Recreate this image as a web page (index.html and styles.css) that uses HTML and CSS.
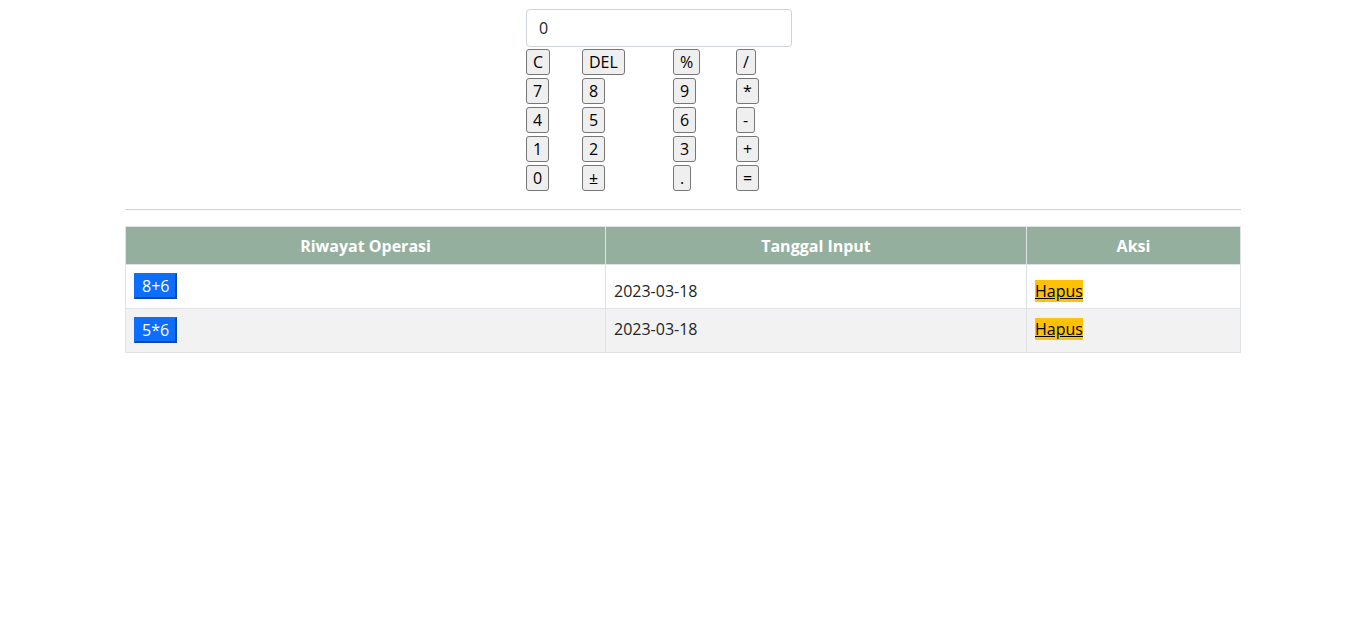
FILE: index.html
```html
<!DOCTYPE html>
<html lang="id">
<head>
<meta charset="utf-8">
<title>Kalkulator</title>
<link rel="stylesheet" href="styles.css">
</head>
<body>
<div class="container">
  <div class="calc">
    <input class="display" type="text" value="0" readonly>
    <div class="keys">
      <button class="key">C</button><button class="key">DEL</button><button class="key">%</button><button class="key">/</button>
      <button class="key">7</button><button class="key">8</button><button class="key">9</button><button class="key">*</button>
      <button class="key">4</button><button class="key">5</button><button class="key">6</button><button class="key">-</button>
      <button class="key">1</button><button class="key">2</button><button class="key">3</button><button class="key">+</button>
      <button class="key">0</button><button class="key">±</button><button class="key">.</button><button class="key">=</button>
    </div>
  </div>
  <hr class="divider">
  <table class="history">
    <thead>
      <tr>
        <th class="col-op">Riwayat Operasi</th>
        <th class="col-date">Tanggal Input</th>
        <th class="col-act">Aksi</th>
      </tr>
    </thead>
    <tbody>
      <tr class="row-first">
        <td class="op-cell"><button class="op">8+6</button></td>
        <td class="shift">2023-03-18</td>
        <td class="shift"><a class="del" href="#">Hapus</a></td>
      </tr>
      <tr class="row-alt">
        <td class="op-cell"><button class="op">5*6</button></td>
        <td>2023-03-18</td>
        <td><a class="del" href="#">Hapus</a></td>
      </tr>
    </tbody>
  </table>
</div>
</body>
</html>
```
FILE: styles.css
```css
html, body {
  margin: 0;
  padding: 0;
  background: #fff;
}
body {
  font-family: "Open Sans", "Noto Sans", sans-serif;
  font-size: 16px;
  line-height: 1.5;
  color: #212529;
}
.container {
  width: 1116px;
  margin: 0 auto;
  padding-top: 9px;
}
.calc {
  width: 266px;
  margin-left: 401px;
}
.display {
  display: block;
  box-sizing: border-box;
  width: 266px;
  height: 38px;
  padding: 6px 12px;
  border: 1px solid #ced4da;
  border-radius: 4px;
  font-family: inherit;
  font-size: 16px;
  line-height: 24px;
  color: #212529;
  outline: none;
}
.keys {
  display: grid;
  grid-template-columns: 56px 91px 63px 56px;
  row-gap: 3px;
  justify-items: start;
  margin-top: 2px;
}
.key {
  font-family: inherit;
  font-size: 16px;
  line-height: normal;
  padding: 1px 6px;
  background: #efefef;
  color: #000;
  border: 1px solid #767676;
  border-radius: 3px;
  margin: 0;
}
.divider {
  margin: 18px 0 16px;
  border: 0;
  border-top: 1px solid #d0d0d0;
}
.history {
  width: 100%;
  border-collapse: collapse;
  border: 1px solid #dee2e6;
}
.history th {
  background: #95af9f;
  color: #fff;
  font-weight: 700;
  text-align: center;
  padding: 7px 8px 6px;
  line-height: 24px;
  border: 1px solid #dee2e6;
}
.col-op { width: 463px; }
.col-date { width: 404px; }
.history td {
  padding: 8px;
  line-height: 24px;
  vertical-align: top;
  border: 1px solid #dee2e6;
}
.history td.op-cell {
  padding-bottom: 9px;
}
.history td.shift {
  padding-top: 14px;
  padding-bottom: 2px;
}
.row-alt td {
  background: #f2f2f2;
}
.op {
  font-family: inherit;
  font-size: 16px;
  line-height: normal;
  padding: 0 6px;
  margin: 0;
  background: #0d6efd;
  color: #fff;
  border: 2px outset #0d6efd;
  border-radius: 0;
}
.del {
  background: #ffc107;
  color: #000;
  text-decoration: underline;
}
```
